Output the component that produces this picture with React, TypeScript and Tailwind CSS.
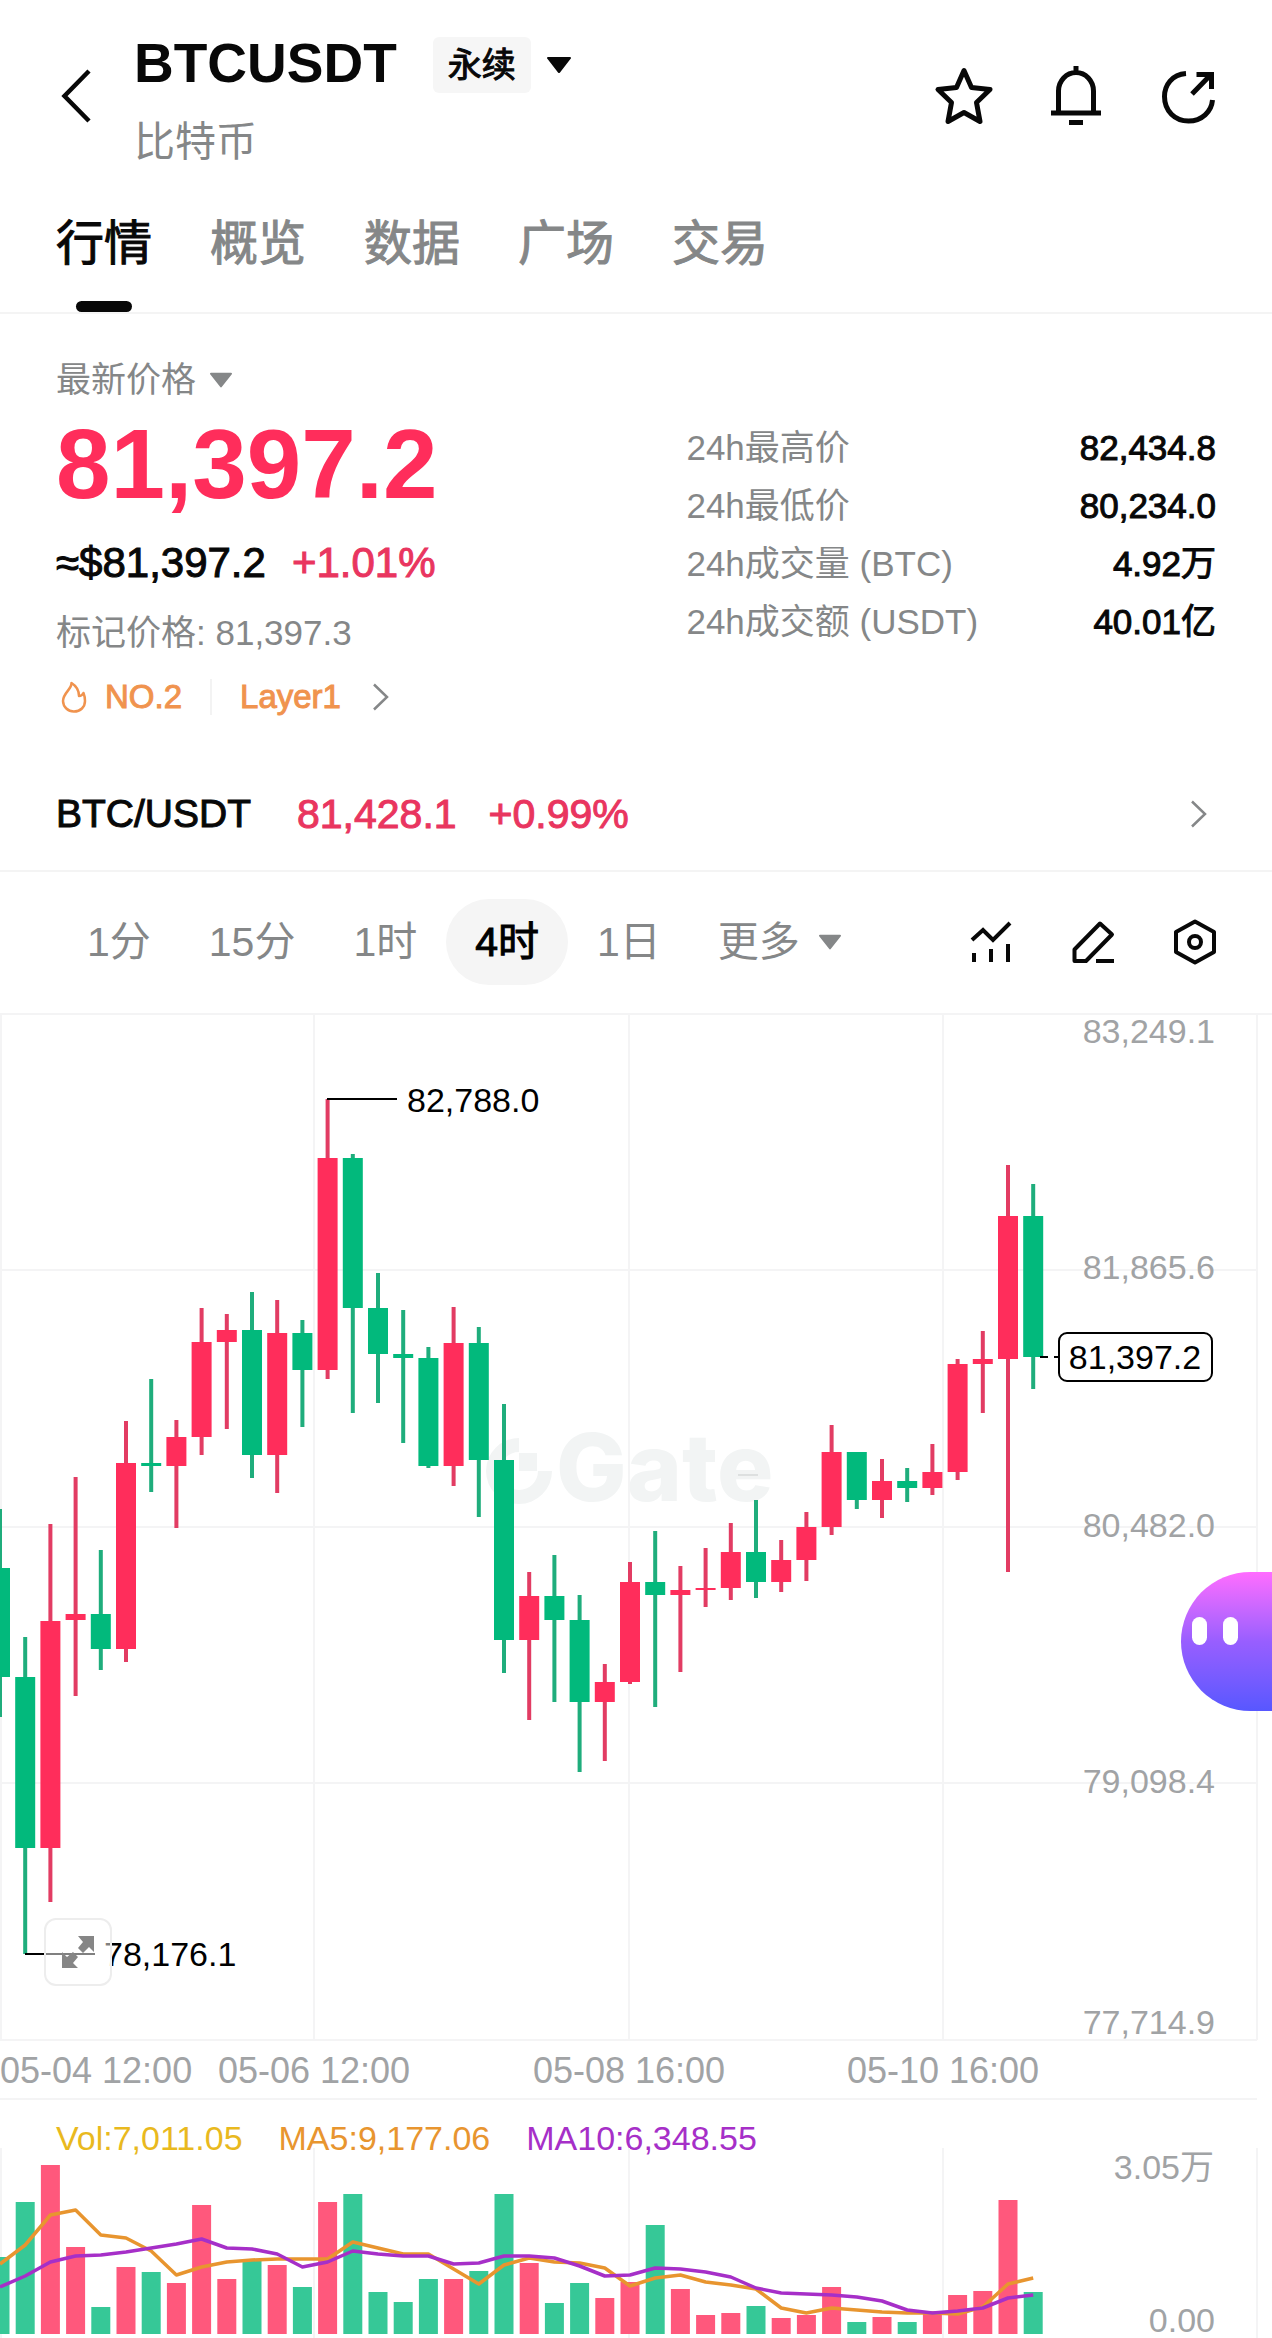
import React, { useState } from 'react';
import { clsx } from 'clsx';

type Candle = {
  up: boolean;
  high: number;
  top: number;
  bottom: number;
  low: number;
};

const STEP = 25.2;
const RED = '#ff2d5b';
const GREEN = '#02b97c';
const GRID_X = [1, 314, 629, 943, 1257];
const GRID_Y = [0, 256, 513, 769, 1026];

const tabs = ['行情', '概览', '数据', '广场', '交易'];
const intervals = ['1分', '15分', '1时', '4时', '1日'];

const stats = [
  { label: '24h最高价', value: '82,434.8' },
  { label: '24h最低价', value: '80,234.0' },
  { label: '24h成交量 (BTC)', value: '4.92万' },
  { label: '24h成交额 (USDT)', value: '40.01亿' },
];

const priceLabels = [
  { text: '83,249.1', y: 29 },
  { text: '81,865.6', y: 265 },
  { text: '80,482.0', y: 523 },
  { text: '79,098.4', y: 779 },
  { text: '77,714.9', y: 1020 },
];

// r = rising (red), f = falling (green); values are offsets from the top of the plot
const rawCandles: [string, number, number, number, number][] = [
  ['f', 495, 554, 663, 703],
  ['f', 623, 663, 834, 940],
  ['r', 510, 607, 834, 888],
  ['r', 463, 600, 606, 682],
  ['f', 536, 600, 635, 656],
  ['r', 407, 449, 635, 648],
  ['f', 365, 449, 452, 478],
  ['r', 406, 423, 452, 514],
  ['r', 294, 328, 423, 441],
  ['r', 300, 316, 328, 415],
  ['f', 278, 316, 441, 464],
  ['r', 286, 319, 441, 479],
  ['f', 306, 319, 356, 413],
  ['r', 85, 144, 356, 365],
  ['f', 140, 144, 294, 399],
  ['f', 259, 294, 340, 389],
  ['f', 296, 340, 344, 429],
  ['f', 333, 344, 452, 454],
  ['r', 293, 329, 452, 472],
  ['f', 313, 329, 446, 503],
  ['f', 390, 446, 626, 659],
  ['r', 558, 582, 626, 706],
  ['f', 541, 582, 606, 688],
  ['f', 581, 606, 688, 758],
  ['r', 650, 668, 688, 747],
  ['r', 548, 568, 668, 670],
  ['f', 517, 568, 581, 693],
  ['r', 552, 576, 581, 658],
  ['r', 534, 574, 576, 593],
  ['r', 509, 538, 574, 586],
  ['f', 486, 538, 568, 584],
  ['r', 526, 546, 568, 578],
  ['r', 498, 513, 546, 567],
  ['r', 411, 438, 513, 521],
  ['f', 438, 438, 486, 495],
  ['r', 445, 467, 486, 504],
  ['f', 454, 467, 474, 488],
  ['r', 430, 458, 474, 481],
  ['r', 345, 350, 458, 466],
  ['r', 317, 345, 350, 399],
  ['r', 151, 202, 345, 558],
  ['f', 170, 202, 343, 375],
];

const candles: Candle[] = rawCandles.map(([dir, high, top, bottom, low]) => ({
  up: dir === 'r',
  high,
  top,
  bottom,
  low,
}));

const volumes = [
  77, 132, 169, 87, 27, 67, 62, 51, 129, 55, 73, 69, 47, 132, 140, 42, 32, 55, 55, 63, 140,
  71, 31, 51, 36, 52, 109, 45, 19, 21, 28, 16, 19, 47, 12, 17, 12, 21, 39, 43, 134, 42,
];

const ma5 = [
  70, 89, 119, 124, 99, 96, 83, 59, 67, 72, 74, 75, 75, 75, 92, 86, 80, 80, 65, 50, 69,
  76, 72, 71, 66, 48, 56, 59, 52, 49, 45, 26, 21, 26, 24, 22, 21, 21, 20, 27, 50, 56,
];

const ma10 = [
  47, 58, 72, 78, 79, 82, 86, 90, 95, 86, 85, 80, 67, 72, 83, 80, 78, 78, 70, 71, 78,
  78, 76, 68, 58, 59, 66, 65, 62, 57, 46, 41, 40, 39, 37, 33, 24, 21, 23, 26, 36, 39,
];

const VOLUME_BASE = 186;

const toPoints = (values: number[]) =>
  values.map((value, i) => `${i * STEP},${VOLUME_BASE - value}`).join(' ');

const Triangle = ({ className }: { className: string }) => (
  <svg viewBox="0 0 24 16" className={className} fill="currentColor" aria-hidden="true">
    <path d="M1 0h22a1 1 0 0 1 .8 1.600L13 15.400a1.200 1.200 0 0 1-2 0L.2 1.600A1 1 0 0 1 1 0Z" />
  </svg>
);

const ChevronRight = () => (
  <svg viewBox="0 0 18 28" className="h-7 w-[18px]" fill="none" stroke="#858788" strokeWidth="2.500" aria-hidden="true">
    <path d="M2 1.500 15 14 2 26.500" />
  </svg>
);

const Header = () => (
  <header className="flex items-center justify-between pt-6 pr-[53px] pl-[60px]">
    <div className="flex items-center gap-[42px]">
      <button aria-label="返回">
        <svg viewBox="0 0 32 56" className="h-14 w-8" fill="none" stroke="#080808" strokeWidth="4.500">
          <path d="M29 2 4.500 27 29 52" />
        </svg>
      </button>
      <div>
        <div className="flex items-center">
          <h1 className="text-[55px] leading-[78px] font-bold">BTCUSDT</h1>
          <button className="mt-1 ml-9 flex items-center gap-4">
            <span className="rounded-md bg-[#f6f6f6] px-[15px] text-[34px] leading-[56px] [-webkit-text-stroke:1px]">
              永续
            </span>
            <Triangle className="h-4 w-6" />
          </button>
        </div>
        <p className="mt-[13px] text-[41px] leading-[54px] text-[#858788]">比特币</p>
      </div>
    </div>
    <div className="flex items-center gap-[50px]">
      <button aria-label="收藏">
        <svg viewBox="0 0 62 62" className="size-[62px]" fill="none" stroke="#080808" strokeWidth="5" strokeLinejoin="round">
          <path d="M31 4.500 38.500 21.500 57 23.500 43.500 36.500 47 55.500 31 46.500 15 55.500 18.500 36.500 5 23.500 23.500 21.500Z" />
        </svg>
      </button>
      <button aria-label="提醒">
        <svg viewBox="0 0 62 62" className="size-[62px]" fill="none" stroke="#080808" strokeWidth="5">
          <path d="M31 0v7M13.500 46V25a17.500 18.500 0 0 1 35 0v21M6 47h50M24 56.500h14" />
        </svg>
      </button>
      <button aria-label="分享">
        <svg viewBox="-4 1 62 62" className="size-[62px]" fill="none" stroke="#080808" strokeWidth="5">
          <path d="M25 8.500C11 9.500 3.500 20 3.500 31.500 3.500 46 14 56 27.500 56S50.500 46.500 51.500 35" />
          <path d="M31 29 50 9.500M35.500 9.500H50.500V24" />
        </svg>
      </button>
    </div>
  </header>
);

const PriceSummary = () => (
  <section className="grid grid-cols-[25fr_21fr] px-14 pt-[42px]">
    <div>
      <button className="flex items-center gap-[14px] text-[35px] leading-[48px] text-[#858788]">
        最新价格
        <Triangle className="h-4 w-[22px]" />
      </button>
      <p className="mt-[10px] text-[98px] leading-[100px] font-bold text-[#ff2d5b]">81,397.2</p>
      <p className="mt-[23px] flex gap-[26px] text-[42px] leading-[52px]">
        <span className="[-webkit-text-stroke:1px]">≈$81,397.2</span>
        <span className="text-[#e9355f] [-webkit-text-stroke:1px]">+1.01%</span>
      </p>
      <p className="mt-5 text-[35px] leading-[48px] text-[#858788]">标记价格: 81,397.3</p>
      <a href="#rank" className="mt-4 flex items-center text-[33px] leading-[48px] text-[#f0934e]">
        <svg viewBox="0 0 26 32" className="mr-[18px] ml-[5px] h-8 w-[26px]" fill="none" stroke="currentColor" strokeWidth="2.500" strokeLinejoin="round">
          <path d="M10.500 2c.5 6-8.500 10-8.500 18a10.800 10.800 0 0 0 11 10.500c6.500 0 11-4.500 11-10.500 0-3-.5-5.500-1.500-8-1 2-2.500 3-4.500 3C18 9 14.500 4.500 10.500 2Z" />
        </svg>
        <span className="[-webkit-text-stroke:1px]">NO.2</span>
        <span className="mx-[28px] h-9 w-0.5 bg-[#f3f3f3]" />
        <span className="mr-[31px] [-webkit-text-stroke:1px]">Layer1</span>
        <ChevronRight />
      </a>
    </div>
    <dl className="mt-[63px] text-[35px] leading-[58px]">
      {stats.map(stat => (
        <div key={stat.label} className="flex justify-between">
          <dt className="text-[#858788]">{stat.label}</dt>
          <dd className="[-webkit-text-stroke:1px]">{stat.value}</dd>
        </div>
      ))}
    </dl>
  </section>
);

type IntervalBarProps = {
  active: string;
  onSelect: (interval: string) => void;
};

const IntervalBar = ({ active, onSelect }: IntervalBarProps) => (
  <div className="flex items-center justify-between pt-[27px] pr-[54px] pb-[29px] pl-[58px] text-[41px] leading-[86px]">
    <div className="flex items-center">
      {intervals.map(interval => (
        <button
          key={interval}
          onClick={() => onSelect(interval)}
          className={clsx(
            'rounded-full px-[29px]',
            interval === active
              ? 'bg-[#f5f5f5] text-black [-webkit-text-stroke:1px]'
              : 'text-[#858788]'
          )}
        >
          {interval}
        </button>
      ))}
      <button className="ml-7 flex items-center gap-[19px] text-[#858788]">
        更多
        <Triangle className="h-4 w-[22px]" />
      </button>
    </div>
    <div className="flex items-center gap-[56px]">
      <button aria-label="指标">
        <svg viewBox="0 0 46 46" className="size-[46px]" fill="none" stroke="#080808" strokeWidth="4">
          <path d="M4 21 15 11l10 10L42 4" />
          <path d="M6 34v9M23 30v13M40 25v18" />
        </svg>
      </button>
      <button aria-label="画线">
        <svg viewBox="0 0 46 46" className="size-[46px]" fill="none" stroke="#080808" strokeWidth="4" strokeLinejoin="round">
          <path d="M30 4.500 42 15.500 16 42H4.500V30.500Z" />
          <path d="M26 42h18" />
        </svg>
      </button>
      <button aria-label="设置">
        <svg viewBox="0 0 46 46" className="size-[46px]" fill="none" stroke="#080808" strokeWidth="4" strokeLinejoin="round">
          <path d="M23 2.500 42 13v20L23 43.500 4 33V13Z" />
          <circle cx="23" cy="23" r="6" />
        </svg>
      </button>
    </div>
  </div>
);

const CandleChart = () => (
  <svg viewBox="0 0 1272 1086" className="block w-full overflow-visible" fontSize="34">
    <g stroke="#f4f4f5" strokeWidth="2">
      {GRID_Y.map((y, i) => (
        <line key={y} x1="0" x2={i === 0 ? 1272 : 1257} y1={y} y2={y} />
      ))}
      {GRID_X.map(x => (
        <line key={x} x1={x} x2={x} y1="0" y2="1026" />
      ))}
      <line x1="0" x2="1257" y1="1085" y2="1085" />
    </g>

    <g fill="#f2f4f4">
      <path d="M519 424v14a19 19 0 1 0 19 19h14a33 33 0 1 1-33-33Z" />
      <path d="M519 439h18v18h-18z" />
      <text x="556" y="487" fontSize="94" fontWeight="800" fontFamily="Inter, sans-serif">Gate</text>
    </g>
    <path d="M738 461h20" stroke="#c9cccc" strokeWidth="1" />

    {candles.map((candle, i) => {
      const x = i * STEP;
      return (
        <g key={i} fill={candle.up ? RED : GREEN}>
          <rect x={x - 2} y={candle.high} width="4" height={candle.low - candle.high} fill={candle.up ? '#e23c63' : '#1fad7c'} />
          <rect x={x - 10} y={candle.top} width="20" height={candle.bottom - candle.top} />
        </g>
      );
    })}

    <g fill="#a1a3a5" textAnchor="end">
      {priceLabels.map(label => (
        <text key={label.text} x="1215" y={label.y}>{label.text}</text>
      ))}
    </g>

    <path d="M327 85h70M25 940h70" stroke="#000" strokeWidth="2" />
    <text x="407" y="98">82,788.0</text>
    <text x="104" y="952">78,176.1</text>

    <path d="M1040 343h8M1054 343h6" stroke="#000" strokeWidth="2" />
    <rect x="1059" y="319" width="153" height="48" rx="8" fill="#fff" stroke="#000" strokeWidth="2" />
    <text x="1135" y="355" textAnchor="middle">81,397.2</text>

    <g fill="#a1a3a5" textAnchor="middle" fontSize="36">
      <text x="0" y="1069" textAnchor="start">05-04 12:00</text>
      <text x="314" y="1069">05-06 12:00</text>
      <text x="629" y="1069">05-08 16:00</text>
      <text x="943" y="1069">05-10 16:00</text>
    </g>
  </svg>
);

const VolumeChart = () => (
  <svg viewBox="0 0 1272 190" className="block w-full" fontSize="34">
    <g stroke="#f4f4f5" strokeWidth="2">
      {GRID_X.map(x => (
        <line key={x} x1={x} x2={x} y1="0" y2="190" />
      ))}
    </g>
    {volumes.map((volume, i) => (
      <rect
        key={i}
        x={i * STEP - 9.5}
        y={VOLUME_BASE - volume}
        width="19"
        height={volume}
        fill={candles[i].up ? '#ff587c' : '#36c897'}
      />
    ))}
    <g fill="none" strokeWidth="3.500" strokeLinejoin="round">
      <polyline points={toPoints(ma5)} stroke="#e8952f" />
      <polyline points={toPoints(ma10)} stroke="#a62fc8" />
    </g>
    <g fill="#a1a3a5" textAnchor="end">
      <text x="1214" y="31">3.05万</text>
      <text x="1215" y="184">0.00</text>
    </g>
  </svg>
);

const App = () => {
  const [activeTab, setActiveTab] = useState('行情');
  const [activeInterval, setActiveInterval] = useState('4时');

  return (
    <div className="overflow-hidden bg-white font-['Liberation_Sans','Noto_Sans_CJK_SC',sans-serif] text-[#080808]">
      <Header />

      <nav className="flex gap-[58px] border-b-2 border-[#f4f4f4] px-14 pt-[43px]">
        {tabs.map(tab => (
          <button
            key={tab}
            onClick={() => setActiveTab(tab)}
            className={clsx(
              'flex flex-col items-center text-[48px] leading-[64px] [-webkit-text-stroke:1px]',
              tab === activeTab ? 'text-[#080808]' : 'text-[#858788]'
            )}
          >
            {tab}
            <span className={clsx('mt-[25px] h-[11px] w-14 rounded-full', tab === activeTab && 'bg-[#080808]')} />
          </button>
        ))}
      </nav>

      <PriceSummary />

      <a
        href="#spot"
        className="mt-[67px] flex items-center border-b-2 border-[#f4f4f4] pr-[64px] pb-[30px] pl-14 text-[41px] leading-[52px] [-webkit-text-stroke:1px]"
      >
        <span className="text-[39px]">BTC/USDT</span>
        <span className="ml-[46px] text-[#e9355f]">81,428.1</span>
        <span className="ml-8 flex-1 text-[#e9355f]">+0.99%</span>
        <ChevronRight />
      </a>

      <IntervalBar active={activeInterval} onSelect={setActiveInterval} />

      <section className="relative">
        <CandleChart />
        <button
          aria-label="全屏"
          className="absolute bottom-[114px] left-11 flex size-[68px] items-center justify-center rounded-xl border-2 border-[#ededed] bg-white/50"
        >
          <svg viewBox="0 0 32 32" className="size-8" fill="#868686">
            <path d="M16 0h16v16l-5-5-6 6-5-5 5-6ZM0 16l5 5 6-5 5 5-5 6 5 5H0Z" />
          </svg>
        </button>
        <button
          aria-label="助手"
          className="absolute top-[558px] right-0 flex h-[139px] w-[91px] gap-4 rounded-l-[70px] bg-linear-to-b from-[#ff6cff] via-[#985eff] to-[#5757ff] pt-[45px] pl-[11px]"
        >
          <span className="h-7 w-[15px] rounded-full bg-white" />
          <span className="h-7 w-[15px] rounded-full bg-white" />
        </button>
      </section>

      <section>
        <div className="flex gap-9 px-14 pt-[14px] text-[34px] leading-[48px]">
          <span className="text-[#e9b91e]">Vol:7,011.05</span>
          <span className="text-[#e8952f]">MA5:9,177.06</span>
          <span className="text-[#a62fc8]">MA10:6,348.55</span>
        </div>
        <div className="-mt-[14px]">
          <VolumeChart />
        </div>
      </section>
    </div>
  );
};

export default App;
